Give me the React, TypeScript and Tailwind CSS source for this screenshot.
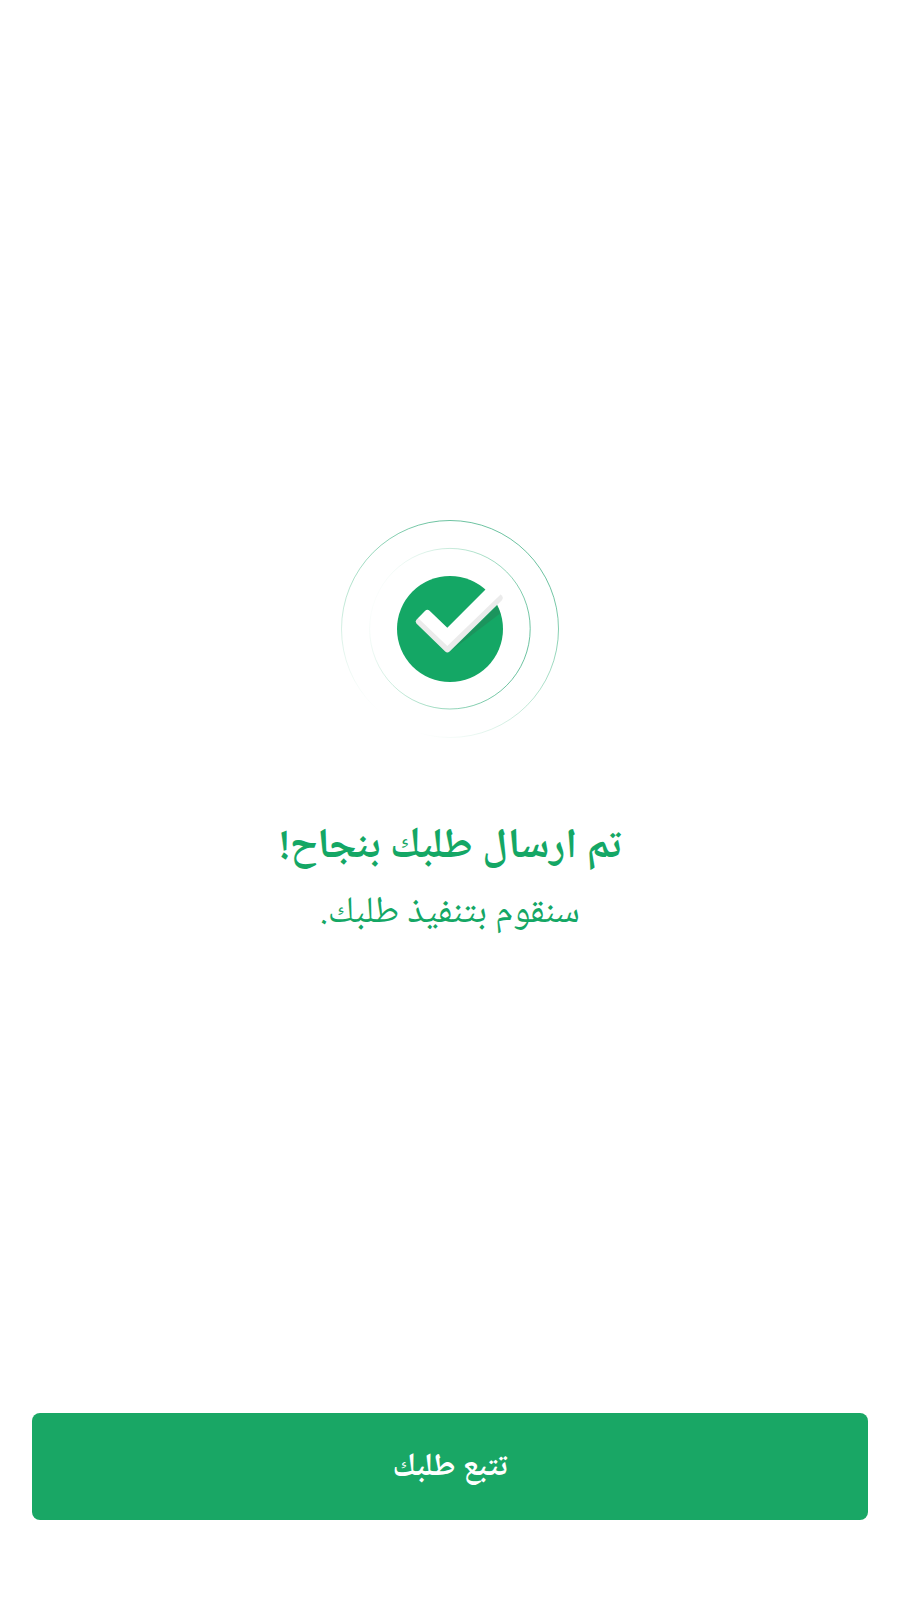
function SuccessIcon() {
  return (
    <svg viewBox="0 0 220 220" className="size-[220px]" fill="none" aria-hidden="true">
      <defs>
        <linearGradient id="outer" gradientUnits="userSpaceOnUse" x1="164" y1="40" x2="68" y2="209">
          <stop offset="0" stopColor="#0c9a62" stopOpacity="0.6" />
          <stop offset="0.5" stopColor="#12a765" stopOpacity="0.32" />
          <stop offset="1" stopColor="#12a765" stopOpacity="0" />
        </linearGradient>
        <linearGradient id="inner" gradientUnits="userSpaceOnUse" x1="182" y1="138" x2="30" y2="82">
          <stop offset="0" stopColor="#0c9a62" stopOpacity="0.6" />
          <stop offset="0.5" stopColor="#12a765" stopOpacity="0.33" />
          <stop offset="1" stopColor="#12a765" stopOpacity="0" />
        </linearGradient>
      </defs>
      <circle cx="110" cy="110" r="108.5" stroke="url(#outer)" />
      <circle cx="109.9" cy="109.7" r="80.3" stroke="url(#inner)" />
      <circle cx="110" cy="110" r="53" fill="#14a765" />
      <path d="M156.7 87L112 131L160.4 94.2Q158.8 90.2 156.7 87Z" fill="#1c945d" />
      <path
        d="M76.4 100.8Q74.8 102.6 76.4 104.5L105.2 132.6Q107.3 134.3 109.6 132.6L161.9 81.2Q163.8 78.8 162.2 76.9L160.4 75.3L107.3 119L78.5 98.8Z"
        fill="#ebebeb"
      />
      <path
        d="M76.4 100.8L85.2 91.7Q87.3 89.9 89.6 91.7L107.3 108.8L150 66L160.6 75.5L107.3 127L78 99Z"
        fill="#fff"
      />
    </svg>
  );
}

export default function App() {
  return (
    <main
      dir="rtl"
      lang="ar"
      className="flex min-h-screen flex-col bg-white px-8 pb-20 font-['Noto_Naskh_Arabic_UI','Noto_Naskh_Arabic','Noto_Sans_Arabic',sans-serif]"
    >
      <section className="flex flex-1 flex-col items-center justify-center pt-12 text-center text-[#14a765]">
        <SuccessIcon />
        <h1 className="mt-[72px] text-[42px] leading-[72px] font-bold">تم ارسال طلبك بنجاح!</h1>
        <p className="text-[37px] leading-[60px]">سنقوم بتنفيذ طلبك.</p>
      </section>
      <button type="button" className="h-[107px] w-full rounded-lg bg-[#19a765] pt-0.5 text-[32px] font-bold text-white">
        تتبع طلبك
      </button>
    </main>
  );
}
